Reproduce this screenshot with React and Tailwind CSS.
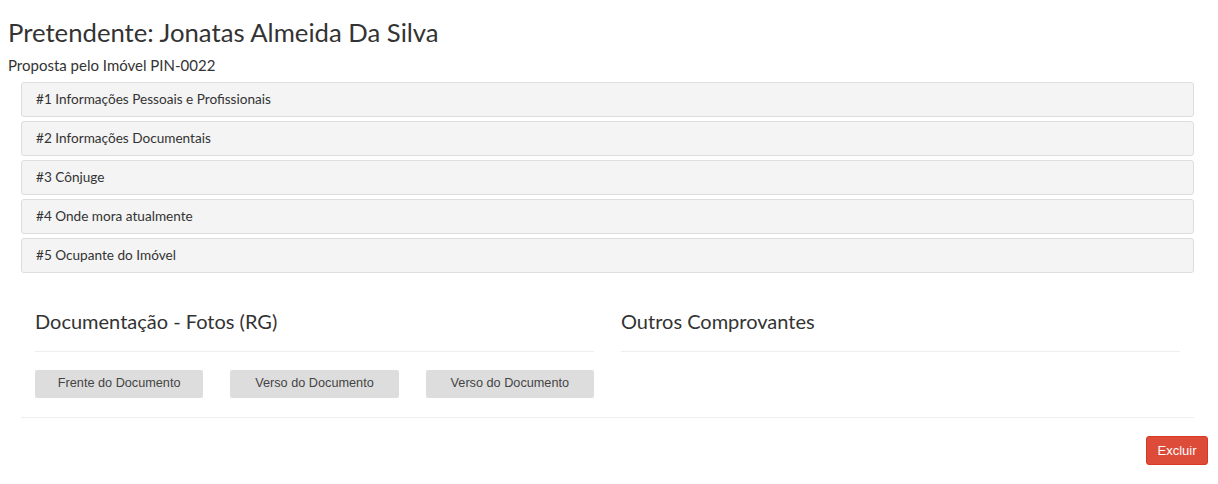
export default function App() {
  const panels = [
    "#1 Informações Pessoais e Profissionais",
    "#2 Informações Documentais",
    "#3 Cônjuge",
    "#4 Onde mora atualmente",
    "#5 Ocupante do Imóvel",
  ];
  const sans = { fontFamily: '"Source Sans Pro", Lato, "Noto Sans", sans-serif' };
  const arial = { fontFamily: '"Liberation Sans", Arial, sans-serif' };
  return (
    <div className="bg-white text-[#333] w-[1218px] h-[484px] pl-2 pr-[10px]" style={sans}>
      <h1 className="text-[25.7px] leading-[30px] pt-[17px] text-[#333] font-normal">
        Pretendente: Jonatas Almeida Da Silva
      </h1>
      <div className="text-[15px] leading-[20px] mt-[8px]">Proposta pelo Imóvel PIN-0022</div>
      <div className="ml-[13px] mr-[14px] mt-[7px] flex flex-col gap-[4px]">
        {panels.map((p) => (
          <div
            key={p}
            className="h-[35px] bg-[#f4f4f4] border border-[#dddddd] rounded-[3px] flex items-center px-[14px] text-[13.6px] text-[#333]"
          >
            {p}
          </div>
        ))}
      </div>
      <div className="ml-[13px] mr-[14px] mt-[34px] px-[14px] grid grid-cols-2 gap-[27px]">
        <div>
          <h3 className="text-[20px] leading-[28px] text-[#333]">Documentação - Fotos (RG)</h3>
          <div className="mt-[16px] border-t border-[#eeeeee]" />
          <div className="mt-[18px] grid grid-cols-3 gap-[27px]" style={arial}>
            {["Frente do Documento", "Verso do Documento", "Verso do Documento"].map((b, i) => (
              <button
                key={i}
                className="h-[28px] bg-[#dddddd] rounded-[2px] text-[12.7px] text-[#444] flex items-center justify-center"
              >
                {b}
              </button>
            ))}
          </div>
        </div>
        <div>
          <h3 className="text-[20px] leading-[28px] text-[#333]">Outros Comprovantes</h3>
          <div className="mt-[16px] border-t border-[#eeeeee]" />
        </div>
      </div>
      <div className="ml-[13px] mr-[14px] mt-[19px] border-t border-[#eeeeee]" />
      <div className="flex justify-end mt-[18px]">
        <button
          className="h-[29px] w-[62px] bg-[#dd4b39] border border-[#d73925] rounded-[3px] text-white text-[13px] flex items-center justify-center"
          style={arial}
        >
          Excluir
        </button>
      </div>
    </div>
  );
}
